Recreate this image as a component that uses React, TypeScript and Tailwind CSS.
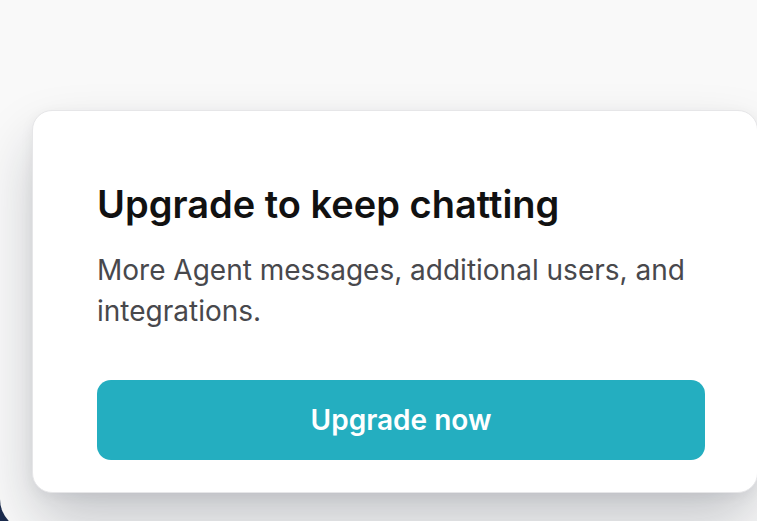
function UpgradeCard() {
    return (
        <div className="w-[726px] rounded-[20px] border border-[#e6e6e8] bg-white pb-[32px] pl-[64px] pr-[53px] pt-[70px] shadow-[0_30px_60px_-4px_rgba(15,23,42,0.24),0_4px_14px_rgba(15,23,42,0.06)]">
            <div className="text-[38px] font-semibold leading-[46px] text-[#111111]">
                Upgrade to keep chatting
            </div>
            <div className="mt-[23px] w-[608px] text-[28px] leading-[41px] text-[#48484c]">
                More Agent messages, additional users, and integrations.
            </div>
            <button className="mt-[48px] flex h-[80px] w-[608px] items-center justify-center rounded-[14px] bg-[#24aec0] text-[28px] font-semibold text-white">
                Upgrade now
            </button>
        </div>
    );
}

export default function App() {
    return (
        <div className="h-[521px] w-[757px] overflow-hidden bg-[#1b2b4d] font-['Inter',sans-serif]">
            <div className="h-[531px] w-[780px] rounded-bl-[32px] bg-[#f9f9f9] pl-[32px] pt-[110px]">
                <UpgradeCard />
            </div>
        </div>
    );
}
